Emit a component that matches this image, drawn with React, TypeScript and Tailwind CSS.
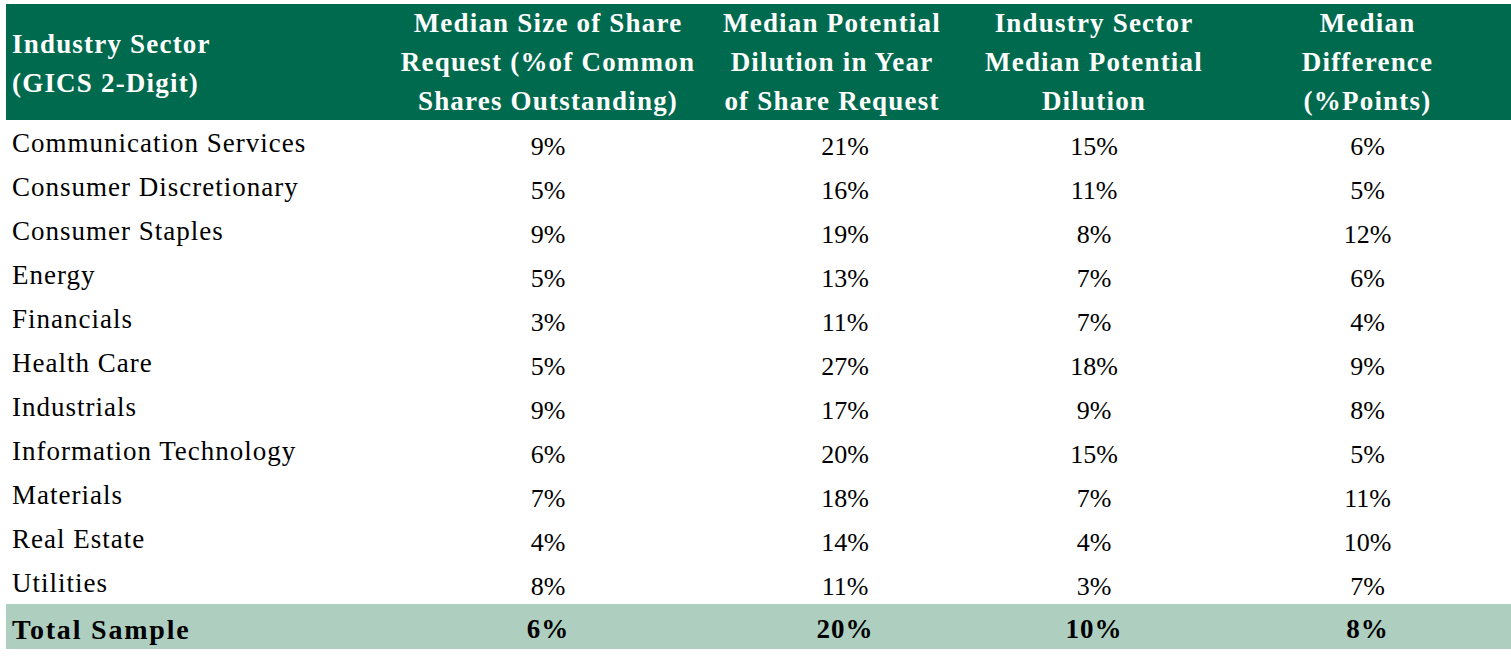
import React from 'react';

type Row = { sector: string; size: string; dilution: string; industry: string; diff: string };

const rows: Row[] = [
    { sector: 'Communication Services', size: '9%', dilution: '21%', industry: '15%', diff: '6%' },
    { sector: 'Consumer Discretionary', size: '5%', dilution: '16%', industry: '11%', diff: '5%' },
    { sector: 'Consumer Staples', size: '9%', dilution: '19%', industry: '8%', diff: '12%' },
    { sector: 'Energy', size: '5%', dilution: '13%', industry: '7%', diff: '6%' },
    { sector: 'Financials', size: '3%', dilution: '11%', industry: '7%', diff: '4%' },
    { sector: 'Health Care', size: '5%', dilution: '27%', industry: '18%', diff: '9%' },
    { sector: 'Industrials', size: '9%', dilution: '17%', industry: '9%', diff: '8%' },
    { sector: 'Information Technology', size: '6%', dilution: '20%', industry: '15%', diff: '5%' },
    { sector: 'Materials', size: '7%', dilution: '18%', industry: '7%', diff: '11%' },
    { sector: 'Real Estate', size: '4%', dilution: '14%', industry: '4%', diff: '10%' },
    { sector: 'Utilities', size: '8%', dilution: '11%', industry: '3%', diff: '7%' },
];

const cols = 'grid grid-cols-[384px_316px_252px_272px_275px]';

export default function App() {
    return (
        <div className="min-h-[661px] w-[1511px] bg-white pl-[6px] pt-[4px] [font-family:'Liberation_Serif','Times_New_Roman',serif] text-black">
            {/* header */}
            <div className={`${cols} h-[116px] bg-[#006a4f] text-[27px] font-bold leading-[39px] tracking-[1.2px] text-white`}>
                <div className="flex items-center pl-[6px] pt-[2px]">
                    <span>Industry Sector<br />(GICS 2-Digit)</span>
                </div>
                <div className="flex items-center justify-center text-center">
                    <span>Median Size of Share<br />Request (%of Common<br />Shares Outstanding)</span>
                </div>
                <div className="flex items-center justify-center text-center">
                    <span>Median Potential<br />Dilution in Year<br />of Share Request</span>
                </div>
                <div className="flex items-center justify-center text-center">
                    <span>Industry Sector<br />Median Potential<br />Dilution</span>
                </div>
                <div className="flex items-center justify-center text-center">
                    <span>Median<br />Difference<br />(%Points)</span>
                </div>
            </div>

            {/* body */}
            {rows.map((r) => (
                <div key={r.sector} className={`${cols} h-[44px] text-[26px] leading-[30px]`}>
                    <div className="flex items-center pl-[6px] pt-[2px] text-[27px] tracking-[1px]">{r.sector}</div>
                    <div className="flex items-center justify-center pt-[10px]">{r.size}</div>
                    <div className="flex items-center justify-center pt-[10px] pl-[26px]">{r.dilution}</div>
                    <div className="flex items-center justify-center pt-[10px]">{r.industry}</div>
                    <div className="flex items-center justify-center pt-[10px]">{r.diff}</div>
                </div>
            ))}

            {/* total */}
            <div className={`${cols} h-[45px] bg-[#aecfc0] text-[27px] font-bold leading-[30px] tracking-[1px]`}>
                <div className="flex items-center pl-[6px] pt-[6px] text-[28px] tracking-[1.8px]">Total Sample</div>
                <div className="flex items-center justify-center pt-[4px]">6%</div>
                <div className="flex items-center justify-center pt-[4px] pl-[26px]">20%</div>
                <div className="flex items-center justify-center pt-[4px]">10%</div>
                <div className="flex items-center justify-center pt-[4px]">8%</div>
            </div>
        </div>
    );
}
